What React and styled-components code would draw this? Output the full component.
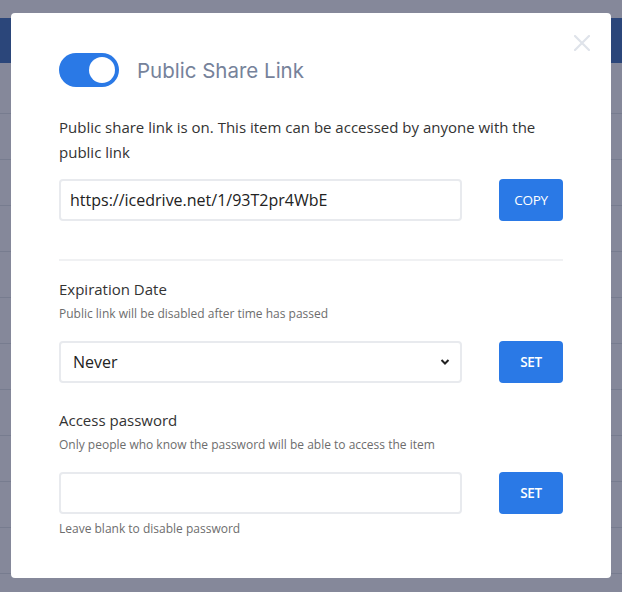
import React from "react";
import styled, { createGlobalStyle } from "styled-components";

const Global = createGlobalStyle`
  html, body { margin: 0; padding: 0; }
  body {
    width: 622px; height: 592px; overflow: hidden;
    background: #f4f5f8;
    font-family: "Open Sans", "Noto Sans", sans-serif;
  }
`;

const Page = styled.div`
  width: 622px;
  height: 592px;
  padding-top: 18px;
  box-sizing: border-box;
  background: #f6f7fa;
`;

const Header = styled.div`
  height: 45px;
  background: #2f65b4;
`;

const Rows = styled.div`
  display: flex;
  flex-direction: column;
  padding-top: 5px;
`;

const Row = styled.div`
  height: 45px;
  border-bottom: 1px solid #d8dbe3;
`;

const Overlay = styled.div`
  position: fixed;
  inset: 0;
  background: rgba(40, 45, 75, 0.55);
  display: flex;
  justify-content: center;
  align-items: flex-start;
  padding-top: 13px;
`;

const Modal = styled.div`
  position: relative;
  width: 600px;
  height: 565px;
  background: #fff;
  border-radius: 4px;
  box-sizing: border-box;
  padding: 40px 48px 0 48px;
  display: flex;
  flex-direction: column;
`;

const Close = styled.button`
  position: absolute;
  top: 20px;
  right: 19px;
  width: 20px;
  height: 20px;
  padding: 0;
  border: 0;
  background: none;
  display: flex;
  align-items: center;
  justify-content: center;
`;

const HeadRow = styled.div`
  display: flex;
  align-items: center;
  gap: 18px;
  height: 34px;
`;

const Toggle = styled.div`
  width: 60px;
  height: 34px;
  border-radius: 17px;
  background: #2a79e6;
  box-sizing: border-box;
  padding: 4px 4px;
  display: flex;
  justify-content: flex-end;
`;

const Knob = styled.div`
  width: 26px;
  height: 26px;
  border-radius: 50%;
  background: #fff;
`;

const Title = styled.h2`
  margin: 0;
  font-family: "Inter", "Lato", sans-serif;
  font-weight: 400;
  font-size: 20.5px;
  color: #76829a;
`;

const Para = styled.p`
  margin: 28px 0 0 0;
  font-size: 15px;
  line-height: 25px;
  color: #333;
`;

const FieldRow = styled.div`
  display: flex;
  justify-content: space-between;
  align-items: center;
  margin-top: ${(p) => p.$mt || 0}px;
`;

const TextInput = styled.input`
  width: 403px;
  height: 42px;
  box-sizing: border-box;
  border: 2px solid #e8eaee;
  border-radius: 4px;
  padding: 0 9px;
  font-family: "Open Sans", "Noto Sans", sans-serif;
  font-size: 16px;
  color: #222;
  outline: none;
`;

const SelectWrap = styled.div`
  position: relative;
  width: 403px;
  height: 42px;
`;

const Select = styled.select`
  appearance: none;
  width: 100%;
  height: 100%;
  box-sizing: border-box;
  border: 2px solid #e8eaee;
  border-radius: 4px;
  padding: 0 12px;
  background: #fff;
  font-family: "Open Sans", "Noto Sans", sans-serif;
  font-size: 16px;
  color: #222;
  outline: none;
`;

const Chevron = styled.svg`
  position: absolute;
  right: 12px;
  top: 17px;
  pointer-events: none;
`;

const Btn = styled.button`
  width: 64px;
  height: 42px;
  border: 0;
  border-radius: 4px;
  background: #2a79e6;
  color: #fff;
  font-family: "Open Sans", "Noto Sans", sans-serif;
  font-size: 13.5px;
  font-weight: ${(p) => (p.$bold ? 600 : 400)};
  letter-spacing: -0.3px;
  padding: 0;
`;

const Divider = styled.hr`
  margin: 38px 0 0 0;
  border: 0;
  border-top: 2px solid #f0f1f3;
  width: 504px;
`;

const Label = styled.div`
  margin-top: ${(p) => p.$mt || 0}px;
  font-size: 15px;
  line-height: 20px;
  color: #333;
`;

const Hint = styled.div`
  margin-top: ${(p) => p.$mt || 0}px;
  font-size: 12px;
  line-height: 16px;
  color: #6d6d6d;
`;

const Content = styled.div`
  width: 504px;
  display: flex;
  flex-direction: column;
`;

export default function App() {
  return (
    <>
      <Global />
      <Page>
        <Header />
        <Rows>
          {Array.from({ length: 11 }).map((_, i) => (
            <Row key={i} />
          ))}
        </Rows>
      </Page>
      <Overlay>
        <Modal>
          <Close aria-label="close">
            <svg width="16" height="16" viewBox="0 0 16 16">
              <path d="M1 1 L15 15 M15 1 L1 15" stroke="#dfe3ea" strokeWidth="2.2" strokeLinecap="round" />
            </svg>
          </Close>
          <Content>
            <HeadRow>
              <Toggle>
                <Knob />
              </Toggle>
              <Title>Public Share Link</Title>
            </HeadRow>
            <Para>
              Public share link is on. This item can be accessed by anyone with the public link
            </Para>
            <FieldRow $mt={14}>
              <TextInput defaultValue="https://icedrive.net/1/93T2pr4WbE" readOnly />
              <Btn>COPY</Btn>
            </FieldRow>
            <Divider />
            <Label $mt={18}>Expiration Date</Label>
            <Hint $mt={7}>Public link will be disabled after time has passed</Hint>
            <FieldRow $mt={19}>
              <SelectWrap>
                <Select defaultValue="never">
                  <option value="never">Never</option>
                </Select>
                <Chevron width="10" height="8" viewBox="0 0 10 8">
                  <path d="M1.5 2 L5 5.5 L8.5 2" stroke="#222" strokeWidth="2" fill="none" />
                </Chevron>
              </SelectWrap>
              <Btn $bold>SET</Btn>
            </FieldRow>
            <Label $mt={27}>Access password</Label>
            <Hint $mt={7}>Only people who know the password will be able to access the item</Hint>
            <FieldRow $mt={19}>
              <TextInput type="password" />
              <Btn $bold>SET</Btn>
            </FieldRow>
            <Hint $mt={7}>Leave blank to disable password</Hint>
          </Content>
        </Modal>
      </Overlay>
    </>
  );
}
